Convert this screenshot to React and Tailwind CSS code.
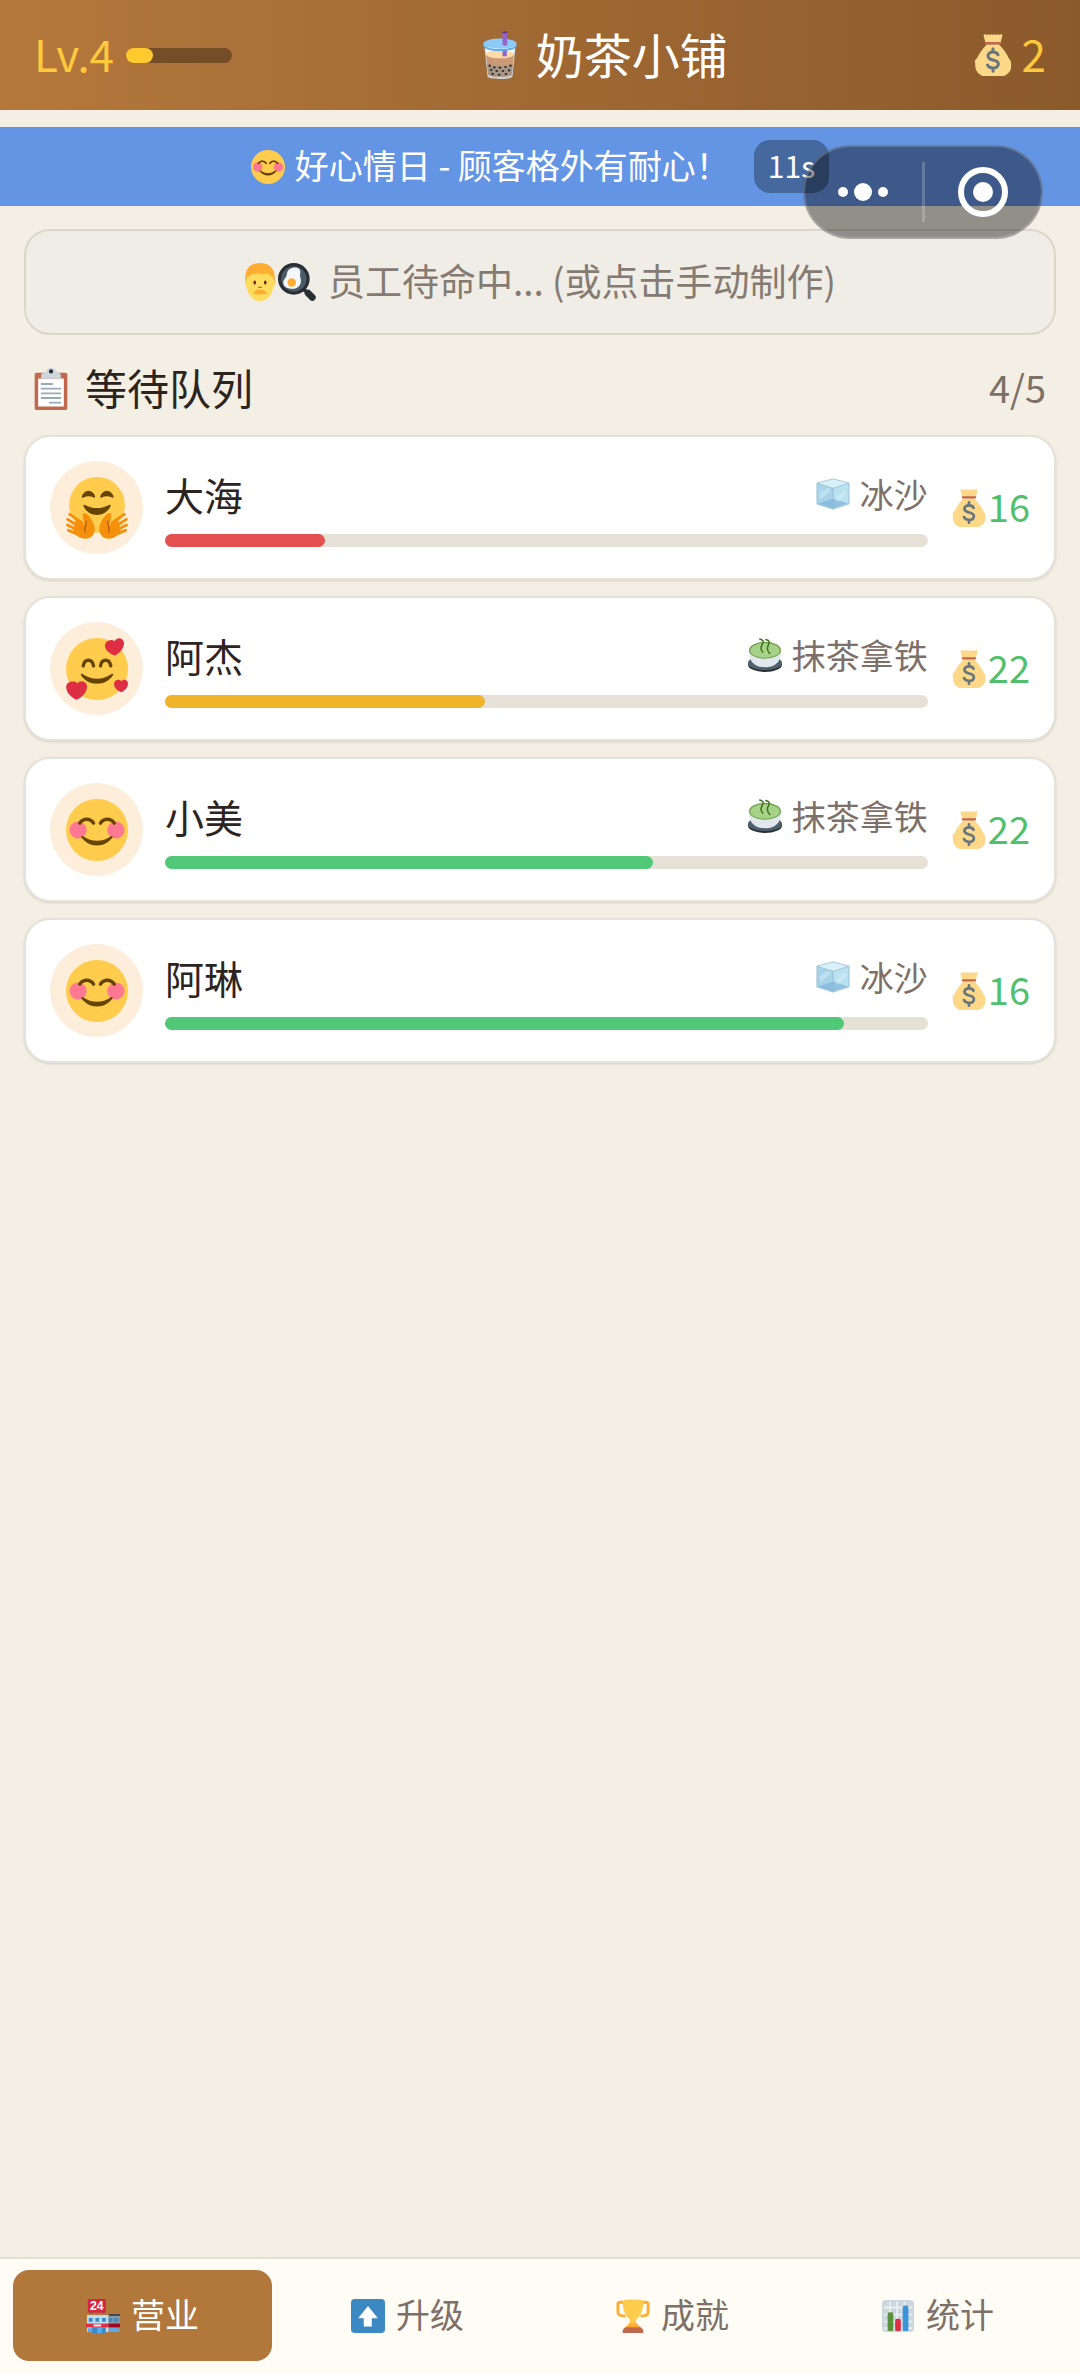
const MoneyBag = ({ className }) => (
  <svg viewBox="0 0 36 36" className={className} aria-hidden="true">
    <path fill="#FDD888" d="M31.9 21.5C29.8 16.3 26 12 23 8.800H13C10.500 11 6.500 16 4.200 21c-1.800 1-2.300 3-1.300 4.600C2 30 5 34.500 9 36h18c5-2 7-5.500 6.500-9.500.3-2-.2-3.800-1.600-5z" />
    <path fill="#FDD888" d="M24.5 7.500 26 1.500c.4-1.500-1.700-1.900-2.700-.6-.8-.9-2.200-.9-2.700.1-.8-1-1.900-1-2.600 0-.7-1-1.900-1-2.600 0-.6-1-1.900-1-2.700-.1-1-1.300-3.200-.8-2.700.6l1.500 6z" />
    <path fill="#BF6952" d="M12.200 6.800h11.600a1.100 1.100 0 0 1 0 2.200H12.200a1.100 1.100 0 0 1 0-2.200z" />
    <path fill="none" stroke="#67757F" strokeWidth="2.600" strokeLinecap="round" d="M22.300 17.800c-.7-1.600-2.300-2.300-4.300-2.300-2.600 0-4.300 1.300-4.300 3.300 0 4.900 8.900 2 8.900 6.900 0 2.200-2 3.500-4.600 3.500-2.300 0-4-.9-4.700-2.600M18 12.700v2.800M18 29.200v2.700" />
  </svg>
);

const BubbleTea = ({ className }) => (
  <svg viewBox="0 0 36 36" className={className} aria-hidden="true">
    <g transform="translate(18) scale(1.25 1) translate(-18)">
      <path fill="#CCD6DD" d="M8.500 10h19l-2 24c-.1 1.300-3.400 2-7.500 2s-7.400-.7-7.500-2z" />
      <path fill="#F2F9FF" d="M9.200 12h17.600l-.4 5H9.600z" />
      <path fill="#C99A75" d="M9.600 17h16.800l-1.300 15.500c-.2 1.300-3.200 1.900-7.100 1.900s-6.900-.6-7.100-1.900z" />
      <ellipse fill="#FFD9A6" cx="18" cy="17.500" rx="8.400" ry="3" />
      <path fill="#9266CC" d="M19.500 14h2.600v5h-2.600z" />
      <path fill="#A89584" d="m10.300 25 .6 7.500c.2 1.300 3.200 1.900 7.100 1.900s6.900-.6 7.100-1.900l.6-7.500c-2 2-13.400 2-15.400 0z" />
      <path fill="#5DADEC" d="M8 9.500c0 2.300 4.500 4 10 4s10-1.700 10-4v1.500c0 2.300-4.500 4-10 4s-10-1.700-10-4z" />
      <ellipse fill="#8CCAF7" cx="18" cy="9.500" rx="10" ry="3.800" />
      <path fill="#9266CC" d="M19.500 1c0-1.300 2.900-1.300 2.900 0v9c0 1.300-2.900 1.300-2.900 0z" />
      <ellipse fill="#6C3483" cx="20.900" cy="1" rx="1.500" ry=".9" />
      <g fill="#292F33">
        <circle cx="11.800" cy="26" r=".8" /><circle cx="14.600" cy="27.300" r=".8" /><circle cx="18" cy="27.500" r=".8" />
        <circle cx="21.300" cy="27" r=".8" /><circle cx="24.300" cy="26" r=".8" /><circle cx="12.700" cy="29.300" r=".8" />
        <circle cx="16" cy="30" r=".8" /><circle cx="19.800" cy="30" r=".8" /><circle cx="23.400" cy="29.500" r=".8" />
        <circle cx="13.600" cy="32.200" r=".8" /><circle cx="17.500" cy="32.800" r=".8" /><circle cx="21.600" cy="32.300" r=".8" />
      </g>
    </g>
  </svg>
);

const Blush = ({ className }) => (
  <svg viewBox="0 0 36 36" className={className} aria-hidden="true">
    <circle fill="#FFCC4D" cx="18" cy="18" r="18" />
    <circle fill="#FF7892" cx="7" cy="18" r="5" />
    <circle fill="#FF7892" cx="29" cy="18" r="5" />
    <path fill="none" stroke="#664500" strokeWidth="2" strokeLinecap="round" d="M8 14c2-3 6-3 8 0M20 14c2-3 6-3 8 0" />
    <path fill="#664500" d="M9.100 21.600c-.3.300-.2.600 0 .9C11 25 14 27 18 27s7-2 8.900-4.500c.2-.3.300-.6 0-.9-.2-.2-.6-.2-.9 0-4.800 3.600-11.200 3.600-16 0-.3-.2-.7-.2-.9 0z" />
  </svg>
);

const HugHand = () => (
  <g fill="none" stroke="#F4900C" strokeLinecap="round">
    <path strokeWidth="1.700" d="m2.200 21.700 7 4.800M1 24.600l7 4.600M.9 27.900l7 3.600M1.500 31l6 2.500" />
    <path fill="#F4900C" strokeWidth=".8" strokeLinejoin="round" d="M6 25.500l5.500 3C11 26 9.500 22.500 10.300 21.500c1.200-1 6 4.500 6 9 0 3.200-2.300 5-5.300 5s-5-2-6.500-3.500z" />
    <path stroke="#A94E06" strokeWidth=".6" d="M11.600 25.500c1 2-1.600 3.500-.4 6.500" />
  </g>
);

const Hug = ({ className }) => (
  <svg viewBox="0 0 36 36" className={className} aria-hidden="true">
    <circle fill="#FFCC4D" cx="18" cy="16.200" r="16.200" />
    <g fill="#664500">
      <path d="M9.200 11.400c.2-1.400 1.900-3.400 3.900-3.400 1.900 0 3.600 1.900 3.800 3.300.1.600-.3.900-.8.600-1.900-1-4.100-1-6 0-.5.300-1 0-.9-.5zM19.900 11.400c.2-1.400 1.900-3.400 3.800-3.400 2 0 3.700 2 3.900 3.300.1.600-.4.900-.9.600-1.900-1-4.100-1-6 0-.5.300-.9 0-.8-.5z" />
      <path d="M10.200 16.200c-.2.300-.1.600 0 .9C12 20.500 14.700 22 18 22s6-1.500 7.800-4.900c.1-.3.200-.6 0-.9-.2-.2-.5-.1-.8 0-4.300 2.400-9.700 2.400-14 0-.3-.1-.6-.2-.8 0z" />
    </g>
    <HugHand />
    <g transform="translate(36) scale(-1 1)">
      <HugHand />
    </g>
  </svg>
);

const Loving = ({ className }) => (
  <svg viewBox="0 0 36 36" className={className} aria-hidden="true">
    <circle fill="#FFCC4D" cx="18" cy="18" r="18" />
    <path fill="none" stroke="#664500" strokeWidth="2" strokeLinecap="round" d="M10 16.200c.8-4.300 5.200-4.300 6 0M20 16.200c.8-4.300 5.200-4.300 6 0" />
    <path fill="#664500" d="M8.700 20.900c-.2.300-.1.600.1.900 1.900 2.700 5 4.800 9.200 4.800s7.300-2.100 9.200-4.800c.2-.3.300-.6.100-.9-.2-.2-.6-.2-.9 0-5 3.700-11.800 3.700-16.800 0-.3-.2-.7-.2-.9 0z" />
    <g fill="#DD2E44">
      <path d="M33.600 2.400c-.4-1.600-2-2.500-3.500-2.100-.9.200-1.600.8-1.900 1.600-.7-.6-1.600-.9-2.500-.6-2 .2-3.400 2-3 4 .7 2.300 3 4 5.800 4.800 2.800-1.600 5.600-4.500 5.100-7.700z" />
      <path d="M12.200 28.200c0-1.700-1.400-3.100-3.100-3.100-1 0-1.900.5-2.500 1.300-.7-.9-1.800-1.200-2.900-1.100C1.500 25.300 0 26.800.1 28.700c.3 3.200 2.900 5.800 6.100 7.200 3.200-1.500 6-4.300 6-7.700z" />
      <path d="M36 26.400c0-1.200-1-2.200-2.200-2.200-.7 0-1.300.4-1.700.9-.4-.5-1-.9-1.700-.9-1.400 0-2.500 1.100-2.500 2.400 0 2.300 1.800 4 4.200 4.900 2.200-.9 3.900-2.800 3.900-5.100z" />
    </g>
  </svg>
);

const Man = ({ className }) => (
  <svg viewBox="3 0 30 36" className={className} aria-hidden="true">
    <path fill="#FFAC33" d="M18 0C8 0 4 6.500 4 14v6h28v-6C32 6.500 28 0 18 0z" />
    <path fill="#FFDC5D" d="M6 13c3 0 3.500-2 4.500-3 2 1.500 4 0 5.500 0s2 1.500 4.500 0c2 1.500 4 0 5.500 0 .5 2 2 3 4 3 .8 1.500.8 3 2 5 .6 2.500 0 4-1.500 5C29.300 31 24.500 36 18 36S6.700 31 5.500 23C4 22 3.300 20 4 18c1.200-2 1-3.500 2-5z" />
    <ellipse fill="#662113" cx="13" cy="18.500" rx="1.200" ry="2" />
    <ellipse fill="#662113" cx="23" cy="18.500" rx="1.200" ry="2" />
    <path fill="none" stroke="#C1694F" strokeWidth="1.200" strokeLinecap="round" d="M16.500 23h3" />
    <path fill="#FFAC33" d="M18 25.500c2-.8 5 .5 7 3.500-4 1-10 1-14 0 2-3 5-4.300 7-3.500z" />
  </svg>
);

const FryingPan = ({ className }) => (
  <svg viewBox="0 0 36 36" className={className} aria-hidden="true">
    <path stroke="#292F33" strokeWidth="3.500" d="m23 24 5 4" />
    <path stroke="#292F33" strokeWidth="6.500" strokeLinecap="round" d="m28.500 28.500 4 4" />
    <circle fill="#4B5B68" stroke="#292F33" strokeWidth="3" cx="15" cy="15" r="13.500" />
    <path fill="#F5F8FA" d="M14 4.500c5-1 8 1.500 7 5.500-.8 3 1.500 5 .5 9-1 4-5 6-9 5.500-5-.5-8-3-7.500-6.500C5.500 15 8 14.500 8.500 10c.3-3 2.500-5 5.500-5.500z" />
    <circle fill="#FFAC33" cx="13" cy="18.500" r="4" />
  </svg>
);

const Clipboard = ({ className }) => (
  <svg viewBox="4 0 28 36" className={className} aria-hidden="true">
    <rect fill="#C1694F" x="4" y="4" width="28" height="32" rx="1.600" />
    <path fill="#FFF" d="M7 9h22v24H7z" />
    <path fill="#CCD6DD" d="M9.500 9V6.500C9.500 4.500 12 3.500 14 3c0-4 8-4 8 0 2 .5 4.500 1.500 4.500 3.500V9z" />
    <circle fill="#292F33" cx="18" cy="2.900" r="1.800" />
    <path stroke="#9AAAB4" strokeWidth="1.600" strokeLinecap="round" d="M10 13.700h9M10 17.700h16M10 21.700h16M10 25.700h16M17 29.700h9" />
  </svg>
);

const IceCube = ({ className }) => (
  <svg viewBox="0 0 36 36" className={className} aria-hidden="true">
    <path fill="#A9D3E9" d="M1 6.500 18 12v22L1 28.500z" />
    <path fill="#B9E1F0" d="M35 6.500 18 12v22l17-5.500z" />
    <path fill="#D8F1F8" d="M18 2 1 6.500 18 12l17-5.500z" />
    <path fill="#7DB4D8" d="M2 28 18 23l16 5-16 5z" opacity=".7" />
    <path fill="#DFF4FA" d="M4 17 15 10v5L4 24zM22 21l10-8v5l-10 9z" opacity=".4" />
    <path fill="none" stroke="#8FB9CC" strokeWidth=".8" d="M18 2 1 6.500v22L18 34l17-5.500v-22zM1 6.500 18 12l17-5.500M18 12v22" />
  </svg>
);

const Matcha = ({ className }) => (
  <svg viewBox="0 0 36 36" className={className} aria-hidden="true">
    <ellipse fill="#292F33" cx="18" cy="28" rx="18" ry="8" />
    <ellipse fill="#50616E" cx="18" cy="26.500" rx="18" ry="7.500" />
    <path fill="#E1E8ED" d="M1 13h34c0 9-3 18-17 18S1 22 1 13z" />
    <ellipse fill="#77A353" cx="18" cy="13" rx="17" ry="9" />
    <ellipse fill="#A6D388" cx="18" cy="13.200" rx="15.500" ry="7.600" />
    <path fill="none" stroke="#3E721D" strokeWidth="1.600" strokeLinecap="round" d="M12.500 1c3 1 4.500 2 3 5s-3 5 0 9M19 1.500c4 1 4 3 2.500 6s-1.500 6 1.500 9" />
  </svg>
);

const Shop = ({ className }) => (
  <svg viewBox="0 0 36 36" className={className} aria-hidden="true">
    <path fill="#66757F" d="M4 13h3v3H4zM17 13h3v3h-3z" />
    <rect fill="#CF2840" x="2" width="19" height="14.500" rx="1.500" />
    <text x="11.500" y="12" textAnchor="middle" fill="#FFF" fontSize="13" className="font-['Liberation_Sans',sans-serif] font-bold">24</text>
    <path fill="#3B4A55" d="M24 16h12v3H24z" />
    <path fill="#BDDDF4" d="M1 17h23v18H1z" />
    <path fill="#8899A6" d="M24 18h12v17H24z" />
    <path fill="#3B88C3" d="M3 20h4v4H3zM10 20h4v4h-4zM17 20h4v4h-4zM24 20h4v4h-4zM30 20h4v4h-4zM6 30h15v6H6z" />
    <path fill="#55ACEE" d="M2 31h4v4H2zM12 30h5v6h-5zM25 31h9v4h-9z" />
    <path fill="#DD2E44" d="M0 26h24v4H0z" />
    <path fill="#A0041E" d="M24 26h12v4H24z" />
    <path fill="#FFF" d="M8 27h8v2H8z" />
  </svg>
);

const UpArrow = ({ className }) => (
  <svg viewBox="0 0 36 36" className={className} aria-hidden="true">
    <rect fill="#3B88C3" width="36" height="36" rx="4" />
    <path fill="#FFF" d="M18 7.500 7.500 20.500h6V29h8.500v-8.500h6.500z" />
  </svg>
);

const Trophy = ({ className }) => (
  <svg viewBox="0 0 36 36" className={className} aria-hidden="true">
    <path fill="none" stroke="#FFAC33" strokeWidth="3" strokeLinejoin="round" d="M10 4.500C8 3 2 3 2 5v9c0 3 3 4 8 4M26 4.500C28 3 34 3 34 5v9c0 3-3 4-8 4" />
    <path fill="#FFAC33" d="M15 22h6c0 4 2 5 5 7.500v3H10v-3c3-2.500 5-3.500 5-7.500z" />
    <path fill="#FFCC4D" d="M7 2c0-2 22-2 22 0 0 10-3 16-8 20v4h-6v-4C10 18 7 12 7 2z" />
    <path fill="#C1694F" d="M7 36v-2c0-2 2-4 4-4h14c2 0 4 2 4 4v2z" />
  </svg>
);

const Chart = ({ className }) => (
  <svg viewBox="0 0 36 36" className={className} aria-hidden="true">
    <rect fill="#CCD6DD" x="1" y="1" width="34" height="34" rx="4" />
    <path fill="none" stroke="#E8EFF3" strokeWidth="2" d="M3 9h30M3 16.500h30M3 24h30M3 31h30M9.500 3v30M17 3v30M25 3v30" />
    <rect fill="#5C913B" x="7" y="14" width="6" height="20" rx="2" />
    <rect fill="#DD2E44" x="15" y="21" width="6" height="13" rx="2" />
    <rect fill="#3B94D9" x="23" y="7" width="6" height="27" rx="2" />
  </svg>
);

const customers = [
  { name: "大海", Face: Hug, Drink: IceCube, drink: "冰沙", price: 16, patience: 21, color: "bg-[#e25050]" },
  { name: "阿杰", Face: Loving, Drink: Matcha, drink: "抹茶拿铁", price: 22, patience: 42, color: "bg-[#efb42a]" },
  { name: "小美", Face: Blush, Drink: Matcha, drink: "抹茶拿铁", price: 22, patience: 64, color: "bg-[#50c878]" },
  { name: "阿琳", Face: Blush, Drink: IceCube, drink: "冰沙", price: 16, patience: 89, color: "bg-[#50c878]" },
];

const tabs = [
  { label: "营业", Icon: Shop },
  { label: "升级", Icon: UpArrow },
  { label: "成就", Icon: Trophy },
  { label: "统计", Icon: Chart },
];

function Header() {
  return (
    <header className="flex items-center justify-between h-[110px] px-[34px] bg-linear-to-r from-[#b5783c] to-[#8b5a2b]">
      <div className="flex items-center gap-3 text-[44px] leading-none text-[#ffc83d]">
        <span className="pb-1">Lv.4</span>
        <div className="w-[106px] h-[15px] rounded-full bg-[#754e29]">
          <div className="w-1/4 h-full rounded-full bg-[#ffc930]" />
        </div>
      </div>
      <h1 className="flex items-center gap-3 text-[48px] leading-none text-white whitespace-nowrap">
        <BubbleTea className="w-12 h-12" />
        <span className="pb-1">奶茶小铺</span>
      </h1>
      <div className="flex items-center gap-2 text-[44px] leading-none text-[#ffc83d]">
        <MoneyBag className="w-[42px] h-[42px]" />
        <span className="pb-1">2</span>
      </div>
    </header>
  );
}

function Capsule() {
  return (
    <div className="absolute top-[145px] right-[37px] flex items-center w-[240px] h-[94px] rounded-full border-2 border-white/20 bg-black/40">
      <button aria-label="更多" className="flex flex-1 items-center justify-center gap-[6px] h-full">
        <span className="w-[10px] h-[10px] rounded-full bg-white" />
        <span className="w-[18px] h-[18px] rounded-full bg-white" />
        <span className="w-[10px] h-[10px] rounded-full bg-white" />
      </button>
      <span className="w-[3px] h-[60px] bg-white/20" />
      <button aria-label="关闭" className="flex flex-1 items-center justify-center h-full">
        <span className="flex items-center justify-center w-[50px] h-[50px] rounded-full border-[6px] border-white">
          <span className="w-5 h-5 rounded-full bg-white" />
        </span>
      </button>
    </div>
  );
}

function CustomerCard({ customer }) {
  const { name, Face, Drink, drink, price, patience, color } = customer;

  return (
    <li className="flex items-center gap-[22px] h-[145px] px-6 rounded-[26px] border-2 border-[#e6e2d9] bg-white shadow-sm">
      <div className="flex shrink-0 items-center justify-center w-[93px] h-[93px] rounded-full bg-[#fdeedb]">
        <Face className="w-[62px] h-[62px]" />
      </div>
      <div className="flex-1">
        <div className="flex items-center justify-between h-[52px] mb-[14px]">
          <span className="text-[39px] leading-none text-[#2c241e]">{name}</span>
          <span className="flex items-center gap-[10px] text-[34px] leading-none text-[#7d7068]">
            <Drink className="w-[34px] h-[34px]" />
            {drink}
          </span>
        </div>
        <div className="h-[13px] rounded-full bg-[#e5e1d6]">
          <div className={`h-full rounded-full ${color}`} style={{ width: `${patience}%` }} />
        </div>
      </div>
      <div className="flex items-center text-[38px] leading-none text-[#50c06c]">
        <MoneyBag className="w-[38px] h-[38px]" />
        <span className="pb-1">{price}</span>
      </div>
    </li>
  );
}

function App() {
  return (
    <div className="relative flex flex-col min-h-screen bg-[#f4efe4] font-['Noto_Sans_CJK_SC',sans-serif]">
      <Header />

      <div className="flex items-center justify-center h-[79px] mt-[17px] bg-[#6495e4] text-[34px] leading-none text-white whitespace-nowrap">
        <Blush className="w-[34px] h-[34px] mr-[10px]" />
        <span className="pb-1">好心情日 - 顾客格外有耐心！</span>
        <span className="ml-6 px-[14px] pt-[10px] pb-[13px] rounded-2xl bg-black/30 text-[30px] leading-none">11s</span>
      </div>
      <Capsule />

      <main className="flex-1 px-6 pt-[23px]">
        <button className="flex items-center justify-center w-full h-[106px] rounded-[26px] border-2 border-[#dad6cb] bg-[#f0ede6] text-[37px] leading-none text-[#857b72] whitespace-nowrap">
          <Man className="w-[32px] h-[38px] mr-[2px]" />
          <FryingPan className="w-[38px] h-[38px] mr-3" />
          <span className="pb-1">员工待命中... (或点击手动制作)</span>
        </button>

        <div className="flex items-center justify-between h-[100px] pt-2 px-[10px]">
          <h2 className="flex items-center gap-[17px] text-[42px] leading-none text-[#2c241e]">
            <Clipboard className="w-[34px] h-[42px]" />
            <span className="pb-1">等待队列</span>
          </h2>
          <span className="pb-1 text-[38px] leading-none text-[#7d7068]">4/5</span>
        </div>

        <ul className="flex flex-col gap-4">
          {customers.map((customer) => (
            <CustomerCard key={customer.name} customer={customer} />
          ))}
        </ul>
      </main>

      <nav className="grid grid-cols-4 gap-[6px] px-[13px] pt-[11px] pb-[13px] border-t-2 border-[#e5e1d6] bg-[#fffcf5]">
        {tabs.map(({ label, Icon }, i) => (
          <button
            key={label}
            className={`flex items-center justify-center gap-[11px] h-[91px] rounded-2xl text-[34px] leading-none ${i === 0 ? "bg-[#b2773a] text-white" : "text-[#7d7068]"}`}
          >
            <Icon className="w-[34px] h-[34px]" />
            <span className="pb-1">{label}</span>
          </button>
        ))}
      </nav>
    </div>
  );
}

export default App;
